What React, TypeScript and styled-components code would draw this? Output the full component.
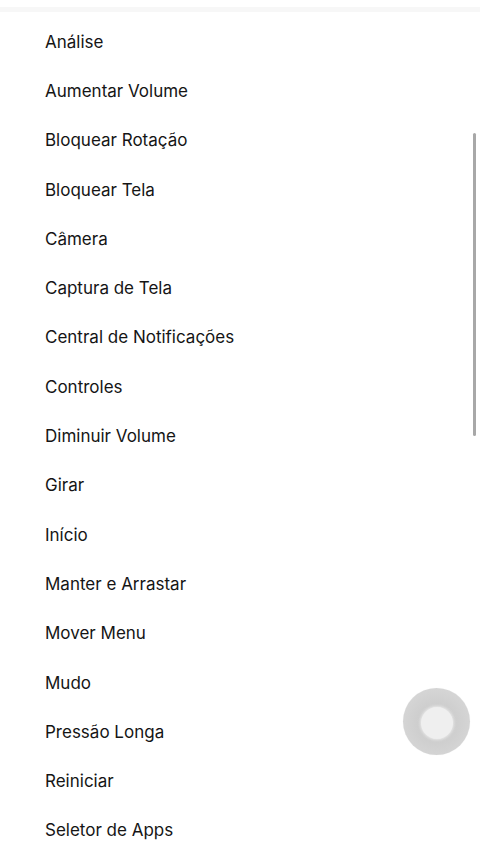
import styled, { createGlobalStyle } from "styled-components";

const GlobalStyle = createGlobalStyle`
  html, body {
    margin: 0;
    padding: 0;
    background: #ffffff;
  }
  body {
    font-family: Inter, "Liberation Sans", sans-serif;
    -webkit-font-smoothing: antialiased;
  }
`;

const Screen = styled.div`
  position: relative;
  width: 480px;
  height: 854px;
  overflow: hidden;
  background: #ffffff;
`;

const TopBar = styled.div`
  height: 7px;
  border-bottom: 5px solid #f7f7f7;
`;

const List = styled.ul`
  list-style: none;
  margin: 0;
  padding: 5px 0 0 45px;
`;

const Row = styled.li`
  height: 49.3px;
  display: flex;
  align-items: center;
  font-size: 17px;
  color: #151515;
`;

const ScrollBar = styled.div`
  position: absolute;
  right: 4px;
  top: 133px;
  width: 3px;
  height: 303px;
  border-radius: 2px;
  background: #a8a8a8;
`;

const TouchButton = styled.div`
  position: absolute;
  left: 403px;
  top: 688px;
  width: 67px;
  height: 67px;
  border-radius: 50%;
  background: radial-gradient(circle at 50% 52%, #c9c9c9 0%, #cdcdcd 35%, #d6d6d6 75%, #dedede 100%);
  box-shadow: 0 0 1px rgba(0, 0, 0, 0.08);
  display: flex;
  align-items: center;
  justify-content: center;
`;

const TouchDot = styled.div`
  width: 32px;
  height: 32px;
  border-radius: 50%;
  background: #efefef;
  box-shadow: 0 0 3px 1px rgba(240, 240, 240, 0.8);
  margin-top: 2px;
`;

const items = [
  "Análise",
  "Aumentar Volume",
  "Bloquear Rotação",
  "Bloquear Tela",
  "Câmera",
  "Captura de Tela",
  "Central de Notificações",
  "Controles",
  "Diminuir Volume",
  "Girar",
  "Início",
  "Manter e Arrastar",
  "Mover Menu",
  "Mudo",
  "Pressão Longa",
  "Reiniciar",
  "Seletor de Apps",
];

const App = () => {
  return (
    <>
      <GlobalStyle />
      <Screen>
        <TopBar />
        <List>
          {items.map((item) => (
            <Row key={item}>{item}</Row>
          ))}
        </List>
        <ScrollBar />
        <TouchButton>
          <TouchDot />
        </TouchButton>
      </Screen>
    </>
  );
};

export default App;
